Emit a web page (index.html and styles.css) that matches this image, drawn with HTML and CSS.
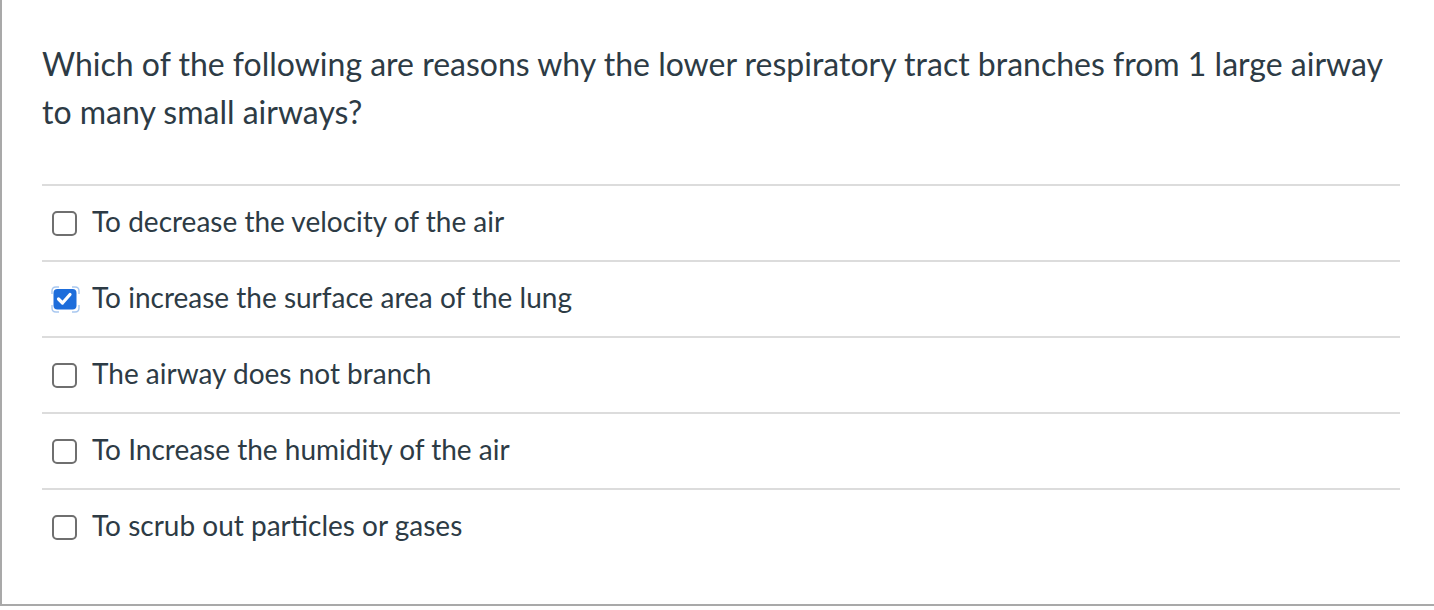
FILE: index.html
```html
<!DOCTYPE html>
<html>
<head>
<meta charset="utf-8">
<link rel="stylesheet" href="styles.css">
</head>
<body>
<div class="panel">
  <div class="question">Which of the following are reasons why the lower respiratory tract branches from 1 large airway to many small airways?</div>
  <div class="answers">
    <label class="answer"><span class="box"></span><span class="text">To decrease the velocity of the air</span></label>
    <label class="answer"><svg class="box-checked" viewBox="0 0 29 27" width="29" height="27"><rect x="2.5" y="3" width="23" height="20.5" rx="4" fill="#1d6ddb"/><path d="M7.5 13 L11.5 17 L19 8.5" fill="none" stroke="#fff" stroke-width="3.2" stroke-linecap="round" stroke-linejoin="round"/><g fill="none" stroke="#a9c8f0" stroke-width="1.4"><path d="M1 8 V5 Q1 1 5 1 H8"/><path d="M21 1 H24 Q28 1 28 5 V8"/><path d="M28 19 V22 Q28 26 24 26 H21"/><path d="M8 26 H5 Q1 26 1 22 V19"/></g></svg><span class="text">To increase the surface area of the lung</span></label>
    <label class="answer"><span class="box"></span><span class="text">The airway does not branch</span></label>
    <label class="answer"><span class="box"></span><span class="text">To Increase the humidity of the air</span></label>
    <label class="answer"><span class="box"></span><span class="text">To scrub out particles or gases</span></label>
  </div>
</div>
</body>
</html>
```

FILE: styles.css
```css
html, body {
  margin: 0;
  padding: 0;
  background: #fff;
}
body {
  font-family: Lato, "Open Sans", sans-serif;
  color: #2d3b45;
}
.panel {
  box-sizing: border-box;
  width: 1434px;
  height: 606px;
  border-left: 2px solid #a9a9a9;
  border-bottom: 2px solid #a9a9a9;
  padding: 40px 34px 0 40px;
}
.question {
  font-size: 32px;
  line-height: 48px;
  margin-bottom: 48px;
}
.answers {
  border-top: 2px solid #dcdcdc;
}
.answer {
  display: flex;
  align-items: center;
  height: 74px;
  border-bottom: 2px solid #dcdcdc;
  padding-left: 10px;
}
.answer:last-child {
  border-bottom: none;
}
.box {
  box-sizing: border-box;
  width: 25px;
  height: 25px;
  border: 2px solid #6f6f6f;
  border-radius: 5px;
  margin-right: 15px;
  flex: none;
}
.box-checked {
  display: block;
  flex: none;
  margin-left: -1px;
  margin-right: 12px;
}
.text {
  font-size: 28px;
  line-height: 34px;
  position: relative;
  top: -2px;
}
```
